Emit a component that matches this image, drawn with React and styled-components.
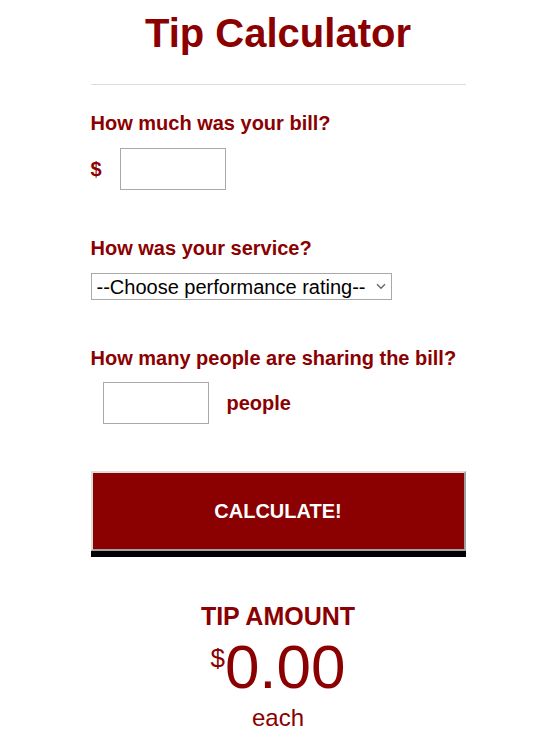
import styled, { createGlobalStyle } from "styled-components";
import { useState } from "react";

const GlobalStyle = createGlobalStyle`
    body {
        margin: 0;
        background: #FFFFFF;
        font-family: "Liberation Sans", Arial, sans-serif;
    }
`

export default function App() {

    const [bill, setBill] = useState("");
    const [service, setService] = useState("");
    const [people, setPeople] = useState("");
    const [tip, setTip] = useState(0);

    function calculate() {
        const total = Number(bill) * Number(service || 0);
        const count = Number(people) || 1;
        setTip(total / count);
    }

    return (
        <>
            <GlobalStyle />
            <Container>
                <Title>Tip Calculator</Title>
                <Divider />
                <Question top={25}>How much was your bill?</Question>
                <Row top={12}>
                    <Unit>$</Unit>
                    <Field value={bill} onChange={(e) => setBill(e.target.value)} />
                </Row>
                <Question top={45}>How was your service?</Question>
                <SelectBox>
                    <Select value={service} onChange={(e) => setService(e.target.value)}>
                        <option value="">--Choose performance rating--</option>
                        <option value="0.3">30% - Outstanding</option>
                        <option value="0.2">20% - Good</option>
                        <option value="0.15">15% - It was OK</option>
                        <option value="0.1">10% - Bad</option>
                        <option value="0.05">5% - Terrible</option>
                    </Select>
                    <svg width="10" height="7" viewBox="0 0 10 7">
                        <path d="M1 1.2 L5 5.2 L9 1.2" fill="none" stroke="#6b6b6b" strokeWidth="1.5" />
                    </svg>
                </SelectBox>
                <Question top={45}>How many people are sharing the bill?</Question>
                <Row top={11}>
                    <Field indent={12} value={people} onChange={(e) => setPeople(e.target.value)} />
                    <Unit>people</Unit>
                </Row>
                <Button onClick={calculate}>CALCULATE!</Button>
                <Result>
                    <h3>TIP AMOUNT</h3>
                    <Amount>
                        <sup>$</sup>{tip.toFixed(2)}
                    </Amount>
                    <p>each</p>
                </Result>
            </Container>
        </>
    )
}

const Container = styled.div`
    width: 375px;
    margin: 0 auto;
    display: flex;
    flex-direction: column;
    color: #8B0000;
`
const Title = styled.h1`
    margin: 10px 0 0;
    font-size: 40px;
    line-height: 46px;
    font-weight: 700;
    text-align: center;
`
const Divider = styled.div`
    height: 1px;
    background-color: #DDDDDD;
    margin-top: 28px;
`
const Question = styled.h2`
    margin: ${(props) => props.top}px 0 0;
    font-size: 20px;
    line-height: 26px;
    font-weight: 700;
`
const Row = styled.div`
    display: flex;
    align-items: center;
    gap: 18px;
    margin-top: ${(props) => props.top}px;
`
const Unit = styled.span`
    font-size: 20px;
    font-weight: 700;
`
const Field = styled.input`
    box-sizing: border-box;
    width: 106px;
    height: 42px;
    margin-left: ${(props) => props.indent || 0}px;
    border: 1px solid #A9A9A9;
    border-radius: 0;
    padding: 0 6px;
    font-size: 20px;
    font-family: inherit;
    outline: none;
`
const SelectBox = styled.div`
    position: relative;
    align-self: flex-start;
    margin-top: 12px;
svg {
    position: absolute;
    right: 6px;
    top: 10px;
    pointer-events: none;
}
`
const Select = styled.select`
    display: block;
    box-sizing: border-box;
    width: 301px;
    height: 27px;
    border: 1px solid #A9A9A9;
    border-radius: 0;
    background-color: #FFFFFF;
    color: #000000;
    font-size: 20px;
    font-family: "Liberation Sans", Arial, sans-serif;
    padding: 0 2px 0 5px;
    appearance: none;
    -webkit-appearance: none;
    outline: none;
`
const Button = styled.button`
    box-sizing: border-box;
    width: 375px;
    height: 80px;
    margin-top: 47px;
    border-width: 2px;
    border-style: solid;
    border-color: #DDDDDD #A0A0A0 #A0A0A0 #DDDDDD;
    box-shadow: 0 6px 0 #000000;
    background-color: #8B0000;
    color: #FFFFFF;
    font-family: "Liberation Sans", Arial, sans-serif;
    font-size: 20px;
    font-weight: 700;
    cursor: pointer;
`
const Result = styled.div`
    margin-top: 51px;
    display: flex;
    flex-direction: column;
    align-items: center;
h3 {
    margin: 0;
    font-size: 25px;
    line-height: 28px;
    font-weight: 700;
}
p {
    margin: 6px 0 0;
    font-size: 24px;
    line-height: 28px;
}
`
const Amount = styled.div`
    margin-top: 6px;
    font-size: 62px;
    line-height: 62px;
sup {
    font-size: 26px;
    line-height: 1;
    vertical-align: 21px;
}
`
